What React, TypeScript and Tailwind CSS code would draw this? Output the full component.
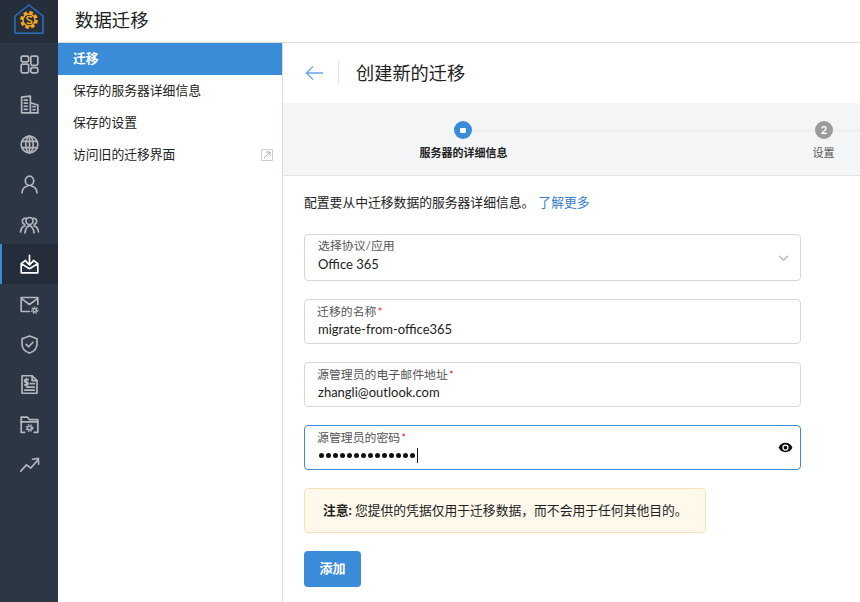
import React from "react";

const font = "font-['Lato','Noto_Sans_CJK_SC',sans-serif]";

// small gear used on the mail and folder icons
function Gear({ x, y, r }: { x: number; y: number; r: number }) {
  return (
    <g>
      <circle cx={x} cy={y} r={r} strokeWidth="1.600" />
      <circle cx={x} cy={y} r={r + 1.500} strokeWidth="1.500" strokeDasharray="1.700 1.300" strokeLinecap="butt" />
    </g>
  );
}

// sidebar icons, all on a 24 box
const icons: React.ReactNode[] = [
  <g key="dash">
    <rect x="2.500" y="2.500" width="8.500" height="6.500" rx="1.500" />
    <rect x="2.500" y="11.500" width="8.500" height="10" rx="1.500" />
    <rect x="13.500" y="2.500" width="8" height="10.500" rx="1.500" />
    <rect x="13.500" y="15.500" width="8" height="6" rx="1.500" />
  </g>,
  <g key="org">
    <path d="M3 21.500V3.500L13 2.500v19M3 21.500h19M13 10l8.500 2.500V21.500" />
    <path d="M6 7h3.500M6 10.500h3.500M6 14h3.500M6 17.500h3.500M16 14.500h2.500M16 18h2.500" />
  </g>,
  <g key="globe">
    <circle cx="12" cy="12" r="9.500" />
    <ellipse cx="12" cy="12" rx="4.200" ry="9.500" />
    <path d="M12 2.500v19M3.300 8.500h17.400M3.300 15.500h17.400" />
  </g>,
  <g key="user">
    <ellipse cx="12" cy="7.800" rx="4.800" ry="5.300" />
    <path d="M3.500 21.500c.3-4.300 2.800-7 6-7.500M20.500 21.500c-.3-4.300-2.800-7-6-7.500" />
  </g>,
  <g key="group">
    <circle cx="12" cy="8" r="4" />
    <path d="M8.500 5.200a3.400 3.400 0 1 0-1.800 6.500M15.500 5.200a3.400 3.400 0 1 1 1.800 6.500" />
    <path d="M1.800 20.500c.3-3.800 2.200-6.500 5-7M22.200 20.500c-.3-3.800-2.200-6.500-5-7M6.800 21.500c.4-4.500 2.700-8 5.200-8s4.800 3.500 5.200 8" />
  </g>,
  <g key="inbox">
    <path d="M2.500 11V21.500h19V11l-5-3.800M2.500 11L7.500 7.200M2.500 11L12 16.800 21.500 11" />
    <path d="M12 1.500v10.500M8 8.500l4 4 4-4" />
  </g>,
  <g key="mailcog">
    <path d="M12 20H2.500V4h19v8M2.500 5l9.500 7 9.500-7" />
    <Gear x={18} y={18.500} r={2} />
  </g>,
  <g key="shield">
    <path d="M12 2.200l8.500 3.200v6.400c0 5-3.500 8.400-8.500 10-5-1.600-8.500-5-8.500-10V5.400z" />
    <path d="M8.200 11.800l2.800 2.800 5-5.200" />
  </g>,
  <g key="doc">
    <path d="M3.500 22V2h11.500l5.500 5.500V22z" />
    <path d="M15 2v5.500h5.500M13 11h4.500M9 15h8.500M6.500 18.500h11" />
    <path d="M10.500 6.500H7.800a1.200 1.200 0 0 0 0 3h1.200a1.200 1.200 0 0 1 0 3H6.500M8.500 5v9" />
  </g>,
  <g key="foldercog">
    <path d="M6.500 21H2.500V3.500h7l2.500 3h9.500V21h-4" />
    <path d="M2.500 9h19" />
    <Gear x={12} y={16} r={2.200} />
  </g>,
  <g key="trend">
    <path d="M2 19.500l6.500-7 5 3.500 8-9" />
    <path d="M15.500 6l6.500-1 .5 6.500" />
  </g>,
];

function Rail() {
  return (
    <aside className="w-[58px] shrink-0 bg-[#2d3645] flex flex-col">
      <div className="h-[43px] bg-[#262e3c] flex items-center justify-center">
        <svg viewBox="0 0 30 30" className="w-[30px] h-[30px] -mt-[5px]" fill="none">
          <path d="M15 1L1 12v16.500q0 .8.800.8h26.400q.8 0 .8-.8V12z" stroke="#2a70c0" strokeWidth="1.500" strokeLinejoin="round" />
          <circle cx="15" cy="16" r="7.500" stroke="#f5a81e" strokeWidth="2.800" strokeDasharray="3.600 2.300" />
          <circle cx="15" cy="16" r="6" stroke="#f5a81e" strokeWidth="1.500" />
          <path d="M18 13.500c-1-1.600-5-1.500-5 .8 0 2.400 5 1.300 5 3.700 0 2-3.600 2-5 .6" stroke="#f5a81e" strokeWidth="1.500" />
        </svg>
      </div>
      <div className="pt-px">
        {icons.map((icon, i) => (
          <div
            key={i}
            className={
              i === 5
                ? "h-[40px] flex items-center justify-center bg-[#252d3b] border-l-2 border-[#3a8bd8] pr-[2px]"
                : "h-[40px] flex items-center justify-center"
            }
          >
            <svg
              viewBox="0 0 24 24"
              className="w-[21px] h-[21px]"
              fill="none"
              stroke={i === 5 ? "#ffffff" : "#b4b8be"}
              strokeWidth="1.900"
              strokeLinecap="round"
              strokeLinejoin="round"
            >
              {icon}
            </svg>
          </div>
        ))}
      </div>
    </aside>
  );
}

function SubNav() {
  const items = ["保存的服务器详细信息", "保存的设置", "访问旧的迁移界面"];
  return (
    <nav className="w-[225px] shrink-0 border-r border-[#dddddd] text-[12.8px] text-[#222222]">
      <div className="h-[32px] bg-[#3a8bd8] text-white font-bold pl-[15px] flex items-center">迁移</div>
      {items.map((label, i) => (
        <div key={label} className="h-[32px] pl-[15px] pr-[9px] flex items-center justify-between">
          <span>{label}</span>
          {i === 2 && (
            <svg viewBox="0 0 12 12" className="w-[12px] h-[12px]" fill="none" stroke="#a8adb3" strokeWidth="1">
              <path d="M.5 .5h11v11H.5z" strokeOpacity=".6" />
              <path d="M3 9L9 3M5 3h4v4" />
            </svg>
          )}
        </div>
      ))}
    </nav>
  );
}

function Stepper() {
  return (
    <div className="h-[73px] shrink-0 bg-[#f4f5f7] border-b border-[#e2e3e5] pt-[18px] flex flex-col">
      <div className="flex items-center h-[18px]">
        <div className="w-[171px] shrink-0" />
        <div className="w-[18px] h-[18px] rounded-full bg-[#3a8bd8] flex items-center justify-center shrink-0">
          <span className="w-[6px] h-[5px] rounded-[1px] bg-white" />
        </div>
        <div className="w-[343px] shrink-0 h-[3px] bg-[#eeeff1]" />
        <div className="w-[18px] h-[18px] rounded-full bg-[#9b9b9b] text-white text-[11px] font-bold flex items-center justify-center shrink-0">
          2
        </div>
        <div className="flex-1 h-[3px] bg-[#eeeff1]" />
      </div>
      <div className="flex mt-[6px] text-[11px] leading-[16px]">
        <div className="w-[361px] shrink-0 text-center font-bold text-[#222222]">服务器的详细信息</div>
        <div className="w-[359px] shrink-0 text-center text-[#555555]">设置</div>
      </div>
    </div>
  );
}

function Field({
  label,
  required,
  children,
  focus,
  right,
  cls,
  bodyCls,
}: {
  label: string;
  required?: boolean;
  children: React.ReactNode;
  focus?: boolean;
  right?: React.ReactNode;
  cls: string;
  bodyCls?: string;
}) {
  return (
    <div
      className={
        (focus ? "border-[#3a8bd8] " : "border-[#d8d8d8] ") +
        "w-[497px] border rounded-[4px] pl-[12px] pr-[7px] flex items-center justify-between bg-white " +
        cls
      }
    >
      <div className={bodyCls}>
        <div className="text-[11.9px] leading-[16px] text-[#555555]">
          {label}
          {required && <span className="text-[#e0303a] ml-[1px]">*</span>}
        </div>
        {children}
      </div>
      {right}
    </div>
  );
}

export default function App() {
  return (
    <div className={"w-[860px] h-[602px] flex overflow-hidden bg-white " + font}>
      <Rail />
      <div className="flex-1 min-w-0 flex flex-col">
        <header className="h-[43px] shrink-0 border-b border-[#dddddd] flex items-center pl-[17px] text-[18.4px] text-[#222222]">
          数据迁移
        </header>
        <div className="flex-1 flex min-h-0">
          <SubNav />
          <main className="flex-1 min-w-0 overflow-hidden flex flex-col">
            <div className="h-[60px] shrink-0 flex items-center pl-[22px]">
              <svg viewBox="0 0 20 16" className="w-[19px] h-[16px]" fill="none" stroke="#6aa5e0" strokeWidth="1.400">
                <path d="M19 8H1.500M8.500 1L1.500 8l7 7" />
              </svg>
              <div className="w-px h-[24px] bg-[#e4e4e4] ml-[14px] mr-[17px]" />
              <h1 className="text-[18.2px] text-[#222222] pt-[2px]">创建新的迁移</h1>
            </div>
            <Stepper />
            <div className="pl-[21px] pt-[17px]">
              <p className="text-[12.8px] leading-[18px] text-[#222222]">
                配置要从中迁移数据的服务器详细信息。
                <span className="text-[#3a80c8] ml-[4px]">了解更多</span>
              </p>
              <div className="mt-[23px] flex flex-col">
                <Field
                  label="选择协议/应用"
                  cls="h-[47px] pl-[13px] pr-[11px]"
                  bodyCls="pb-[4px]"
                  right={
                    <svg viewBox="0 0 12 8" className="w-[11px] h-[7px] mt-[2px]" fill="none" stroke="#c8c8c8" strokeWidth="2.200">
                      <path d="M1 1l5 5 5-5" />
                    </svg>
                  }
                >
                  <div className="text-[13px] leading-[20px] text-[#222222]">Office 365</div>
                </Field>
                <Field label="迁移的名称" required cls="h-[45px] mt-[18px]" bodyCls="pb-px">
                  <div className="text-[13px] leading-[18px] text-[#222222] ml-[1px]">migrate-from-office365</div>
                </Field>
                <Field label="源管理员的电子邮件地址" required cls="h-[45px] mt-[18px]" bodyCls="pb-px">
                  <div className="text-[13px] leading-[18px] text-[#222222] ml-[1px]">zhangli@outlook.com</div>
                </Field>
                <Field
                  label="源管理员的密码"
                  required
                  focus
                  cls="h-[45px] mt-[18px]"
                  bodyCls="pb-px"
                  right={
                    <svg viewBox="0 0 24 24" className="w-[15px] h-[15px]" fill="#111111">
                      <path d="M12 4.500C7 4.500 2.700 7.600 1 12c1.700 4.400 6 7.500 11 7.500s9.300-3.100 11-7.500c-1.700-4.400-6-7.500-11-7.500zM12 17a5 5 0 1 1 0-10 5 5 0 0 1 0 10zm0-8a3 3 0 1 0 0 6 3 3 0 0 0 0-6z" />
                    </svg>
                  }
                >
                  <div className="flex items-center h-[18px] ml-[2px]">
                    {Array.from({ length: 14 }).map((_, i) => (
                      <span key={i} className="w-[5px] h-[5px] rounded-full bg-[#111111] mr-[2px] last:mr-0" />
                    ))}
                    <span className="w-px h-[15px] bg-[#111111]" />
                  </div>
                </Field>
              </div>
              <div className="mt-[18px] w-[402px] h-[45px] bg-[#fff8eb] border border-[#f8e2b8] rounded-[4px] pl-[18px] flex items-center text-[12.8px] text-[#222222]">
                <b className="font-bold mr-[3px]">注意:</b>您提供的凭据仅用于迁移数据，而不会用于任何其他目的。
              </div>
              <button className="mt-[18px] w-[57px] h-[36px] bg-[#3a8bd8] text-white text-[13px] font-bold rounded-[4px]">
                添加
              </button>
            </div>
          </main>
        </div>
      </div>
    </div>
  );
}
